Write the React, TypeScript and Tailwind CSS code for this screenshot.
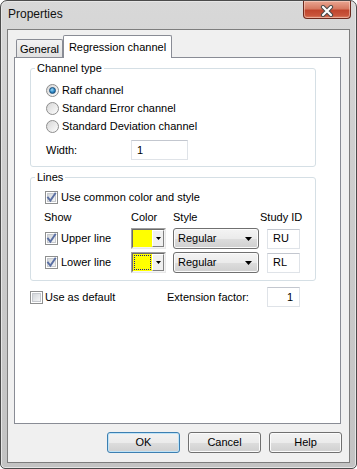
import React from "react";

function CheckBox({ checked = false }: { checked?: boolean }) {
  return (
    <span className="flex h-[13px] w-[13px] shrink-0 border border-[#8e8f8f] bg-white p-px">
      <span className="flex h-full w-full items-center justify-center border border-[#c6c9ce] bg-[linear-gradient(135deg,#d3d6da,#f4f5f6)]">
        {checked && (
          <svg width="11" height="11" viewBox="0 0 11 11" className="-m-[2px] shrink-0 overflow-visible">
            <path d="M2 5.6 L4.4 8.6 L9.2 1.6" fill="none" stroke="#5a6fa3" strokeWidth="1.9" strokeLinecap="square" />
          </svg>
        )}
      </span>
    </span>
  );
}

function Radio({ checked = false }: { checked?: boolean }) {
  return (
    <span className="flex h-[13px] w-[13px] shrink-0 items-center justify-center rounded-full border border-[#8d8d8d] bg-[linear-gradient(135deg,#d6d6d6,#fdfdfd)]">
      {checked && (
        <span className="h-[7px] w-[7px] rounded-full border border-[#1a4f7c] bg-[radial-gradient(circle_at_40%_35%,#9ad8f8,#2a86c4_55%,#154f80)]" />
      )}
    </span>
  );
}

function TextBox({ value, w, right = false }: { value: string; w: string; right?: boolean }) {
  return (
    <div
      className={`flex h-[20px] shrink-0 items-center border border-[#dfe3e8] border-t-[#c3c7cf] bg-white ${w} ${
        right ? "justify-end pr-[6px]" : "pl-[5px]"
      }`}
    >
      {value}
    </div>
  );
}

function ColorPick({ focus = false }: { focus?: boolean }) {
  return (
    <div className="flex h-[21px] w-[35px] shrink-0 border border-[#a0a0a0] border-b-[#e8e8e8] border-r-[#e8e8e8]">
      <div className="flex flex-1 border border-[#6a6a6a] border-b-[#f4f4f4] border-r-[#f4f4f4]">
        <div className="flex-1 bg-[#ffff00] p-px">
          {focus && <div className="h-full w-full border border-dotted border-[#1a1a8a]" />}
        </div>
        <div className="flex w-[12px] items-center justify-center border border-[#ffffff] border-b-[#808080] border-r-[#808080] bg-[#f0f0f0]">
          <svg width="5" height="3" viewBox="0 0 5 3">
            <path d="M0 0 H5 L2.5 3 Z" fill="#000" />
          </svg>
        </div>
      </div>
    </div>
  );
}

function StyleSelect() {
  return (
    <div className="ml-[7px] flex h-[21px] w-[86px] shrink-0 items-center justify-between rounded-[3px] border border-[#707070] bg-[linear-gradient(to_bottom,#f4f4f4_0%,#ebebeb_50%,#dddddd_51%,#cfcfcf_100%)] pl-[4px] pr-[6px] shadow-[inset_0_0_0_1px_#fbfbfb]">
      <span>Regular</span>
      <svg width="7" height="4" viewBox="0 0 7 4">
        <path d="M0 0 H7 L3.5 4 Z" fill="#000" />
      </svg>
    </div>
  );
}

function Button({ label, primary = false }: { label: string; primary?: boolean }) {
  return (
    <div
      className={`flex h-[21px] w-[73px] items-center justify-center rounded-[3px] border bg-[linear-gradient(to_bottom,#f2f2f2_0%,#ebebeb_50%,#dddddd_51%,#cfcfcf_100%)] ${
        primary ? "border-[#3c7fb1] shadow-[inset_0_0_0_1px_#bfe3f7]" : "border-[#707070] shadow-[inset_0_0_0_1px_#fbfbfb]"
      }`}
    >
      {label}
    </div>
  );
}

export default function App() {
  return (
    <div className="h-[469px] w-[357px] bg-white font-['Liberation_Sans',Arial,sans-serif] text-[11px] leading-[13px] text-black">
      <div className="flex h-full w-full flex-col rounded-t-[7px] rounded-b-[5px] border border-[#4b4b4b] bg-[linear-gradient(to_bottom,#d8d8d8,#cfcfcf_30%,#c3c3c3)] shadow-[inset_0_0_0_1px_#e6e6e6]">
        <div className="flex h-[28px] shrink-0 items-start justify-between">
          <span className="ml-[7px] mt-[6px] text-[12px] leading-[15px] text-[#111]">Properties</span>
          <div className="mr-[5px] flex h-[18px] w-[48px] items-center justify-center rounded-b-[4px] border border-t-0 border-[#6d2a1e] bg-[linear-gradient(to_bottom,#e9a692,#d67a62_45%,#c0452d_55%,#c9553b_85%,#de8468)] shadow-[inset_0_0_0_1px_rgba(255,230,220,0.45)]">
            <svg width="14" height="12" viewBox="0 0 14 12" className="mt-[2px]">
              <path d="M3 2 L11 10 M11 2 L3 10" stroke="#4a4a4a" strokeWidth="4.2" strokeLinecap="round" />
              <path d="M3 2 L11 10 M11 2 L3 10" stroke="#ffffff" strokeWidth="2.2" strokeLinecap="round" />
            </svg>
          </div>
        </div>

        <div className="mx-[6px] flex h-[434px] shrink-0 flex-col border border-[#7d7d7d] bg-[#f0f0f0] pl-[6px] pr-[7px] pt-[5px]">
          <div className="flex h-[22px] items-end pl-[2px]">
            <div className="flex h-[18px] w-[47px] items-center justify-center rounded-t-[2px] border border-b-0 border-[#898c95] bg-[linear-gradient(to_bottom,#f3f3f3,#e1e1e1)] pt-px">
              General
            </div>
            <div className="relative z-10 -mb-px flex h-[23px] w-[109px] items-center justify-center rounded-t-[2px] border border-b-0 border-[#898c95] bg-white">
              Regression channel
            </div>
          </div>

          <div className="flex h-[367px] w-[327px] flex-col border border-[#898c95] bg-white pl-[15px] pt-[10px]">
            <div className="relative h-[99px] w-[286px] rounded-[3px] border border-[#d5dfe5] pt-[12px]">
              <span className="absolute -top-[7px] left-[4px] bg-white px-[2px]">Channel type</span>
              <div className="flex h-[18px] items-center gap-[3px] pl-[15px]">
                <Radio checked />
                <span>Raff channel</span>
              </div>
              <div className="flex h-[18px] items-center gap-[3px] pl-[15px]">
                <Radio />
                <span>Standard Error channel</span>
              </div>
              <div className="flex h-[18px] items-center gap-[3px] pl-[15px]">
                <Radio />
                <span>Standard Deviation channel</span>
              </div>
              <div className="mt-[5px] flex h-[20px] items-center pl-[15px]">
                <span className="w-[85px]">Width:</span>
                <TextBox value="1" w="w-[57px]" />
              </div>
            </div>

            <div className="relative mt-[10px] h-[104px] w-[286px] rounded-[3px] border border-[#d5dfe5] pt-[10px]">
              <span className="absolute -top-[7px] left-[4px] bg-white px-[2px]">Lines</span>
              <div className="flex h-[18px] items-center gap-[3px] pl-[14px]">
                <CheckBox checked />
                <span>Use common color and style</span>
              </div>
              <div className="mt-[2px] flex h-[18px] items-center pl-[13px]">
                <span className="w-[87px]">Show</span>
                <span className="w-[42px]">Color</span>
                <span className="w-[87px]">Style</span>
                <span>Study ID</span>
              </div>
              <div className="mt-[2px] flex h-[21px] items-center pl-[14px]">
                <div className="flex w-[86px] items-center gap-[3px]">
                  <CheckBox checked />
                  <span>Upper line</span>
                </div>
                <ColorPick />
                <StyleSelect />
                <div className="ml-[8px]">
                  <TextBox value="RU" w="w-[33px]" />
                </div>
              </div>
              <div className="mt-[3px] flex h-[21px] items-center pl-[14px]">
                <div className="flex w-[86px] items-center gap-[3px]">
                  <CheckBox checked />
                  <span>Lower line</span>
                </div>
                <ColorPick focus />
                <StyleSelect />
                <div className="ml-[8px]">
                  <TextBox value="RL" w="w-[33px]" />
                </div>
              </div>
            </div>

            <div className="mt-[6px] flex h-[20px] items-center">
              <div className="flex w-[137px] items-center gap-[2px]">
                <CheckBox />
                <span>Use as default</span>
              </div>
              <span className="w-[100px]">Extension factor:</span>
              <TextBox value="1" w="w-[33px]" right />
            </div>
          </div>

          <div className="mt-[8px] flex h-[21px] justify-end gap-[8px]">
            <Button label="OK" primary />
            <Button label="Cancel" />
            <Button label="Help" />
          </div>
        </div>
      </div>
    </div>
  );
}
